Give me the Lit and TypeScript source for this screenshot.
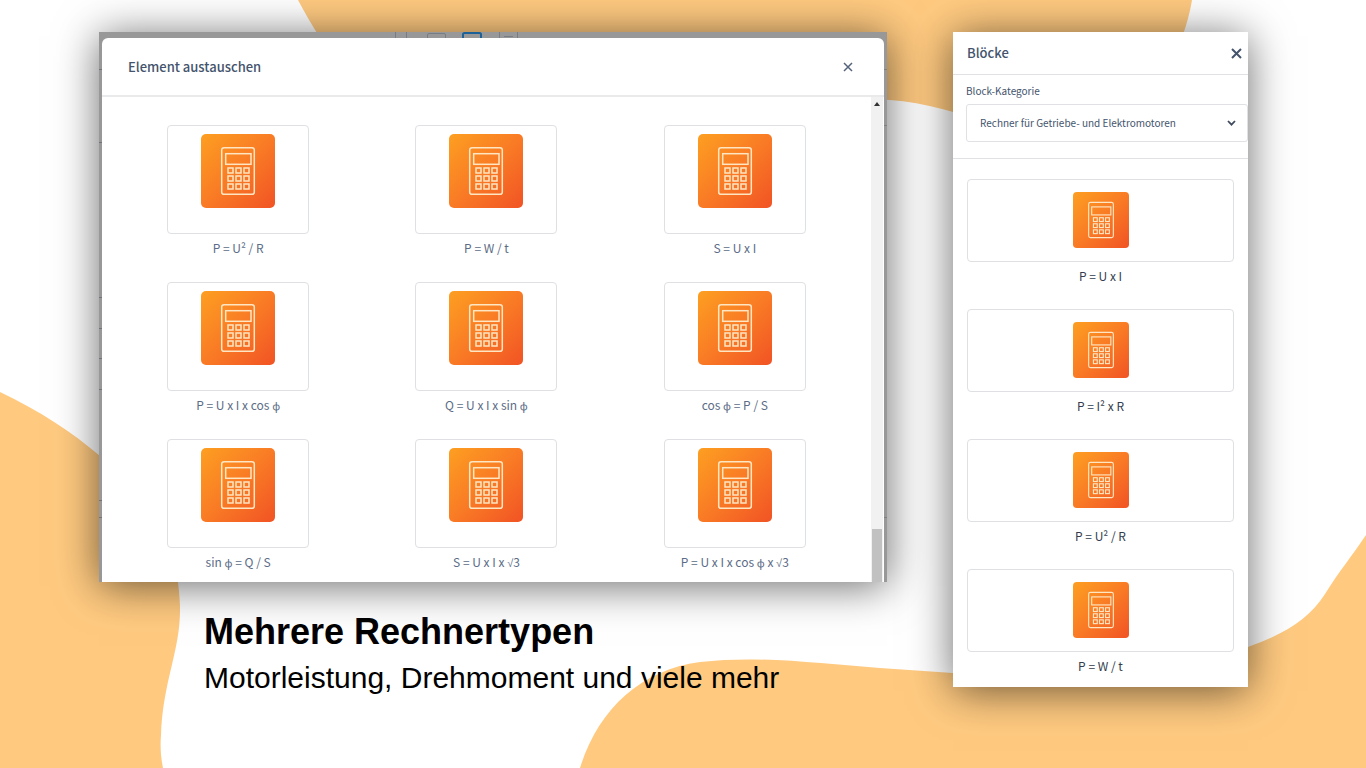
import { LitElement, html, svg, css } from "lit";
import { customElement, property } from "lit/decorators.js";

const KEY_X = [27, 35, 43];
const KEY_Y = [34, 42, 50];

/** Sets the mathematical symbols of a formula in a face with compact glyphs. */
const formula = (text: string) =>
  text
    .split(/([ϕ√])/)
    .map((part) => (/[ϕ√]/.test(part) ? html`<span class="symbol">${part}</span>` : part));

@customElement("calc-icon")
class CalcIcon extends LitElement {
  static styles = css`
    :host {
      display: block;
    }
    .tile {
      display: block;
      width: 100%;
      height: 100%;
    }
  `;

  render() {
    return html`<svg class="tile" viewBox="0 0 74 74" aria-hidden="true">
      <defs>
        <linearGradient id="g" x1="0" y1="0" x2="1" y2="1">
          <stop offset="0" stop-color="#fd9f21" />
          <stop offset="0.5" stop-color="#f97b25" />
          <stop offset="1" stop-color="#f15324" />
        </linearGradient>
      </defs>
      <rect width="74" height="74" rx="5" fill="url(#g)" />
      <g fill="none" stroke="#ffe6c2" stroke-width="1.5">
        <rect x="20.7" y="13.7" width="32.6" height="46.6" rx="2.4" />
        <rect x="24.7" y="19.7" width="25.3" height="10.6" />
        ${KEY_Y.map((y) =>
          KEY_X.map((x) => svg`<rect x=${x} y=${y} width="5" height="5" />`)
        )}
      </g>
    </svg>`;
  }
}

@customElement("element-dialog")
class ElementDialog extends LitElement {
  @property({ attribute: false }) items: string[] = [];

  static styles = css`
    :host {
      display: flex;
      flex-direction: column;
      position: relative;
      overflow: hidden;
      background: #989898;
      color: #44546c;
    }
    .toolbar {
      display: flex;
      height: 6px;
      flex: none;
      padding-left: 295px;
    }
    .toolbar svg {
      display: block;
    }
    .edge {
      position: absolute;
      top: 0;
      width: 4px;
      height: 100%;
    }
    .edge.left {
      left: 0;
    }
    .edge.right {
      right: 0;
    }
    .dialog {
      position: relative;
      flex: 1;
      min-height: 0;
      display: flex;
      flex-direction: column;
      margin: 0 3px;
      background: #fff;
      border-radius: 6px 6px 0 0;
    }
    .head {
      display: flex;
      align-items: center;
      justify-content: space-between;
      height: 57px;
      flex: none;
      padding: 0 31px 0 26px;
      border-bottom: 2px solid #e9eaec;
    }
    h2 {
      margin: 0;
      font-size: 13px;
      line-height: 20px;
      font-weight: 500;
    }
    .close {
      display: flex;
      padding: 0;
      border: 0;
      background: none;
    }
    .body {
      flex: 1;
      min-height: 0;
      display: flex;
    }
    .list {
      flex: 1;
      display: grid;
      grid-template-columns: repeat(3, minmax(0, 1fr));
      grid-auto-rows: 157px;
      justify-items: center;
      margin: 0;
      padding: 28px 12px 0;
      list-style: none;
      overflow: hidden;
    }
    .item {
      display: flex;
      flex-direction: column;
      align-items: center;
      gap: 4px;
      padding: 0;
      border: 0;
      background: none;
      color: #5c6c86;
      font: inherit;
      font-size: 12px;
      line-height: 20px;
    }
    .symbol {
      font-family: "Noto Sans", sans-serif;
      font-size: 11px;
      line-height: 1;
    }
    .frame {
      display: flex;
      justify-content: center;
      box-sizing: border-box;
      width: 142px;
      height: 109px;
      padding-top: 8px;
      border: 1px solid #dfe0e3;
      border-radius: 4px;
      background: #fff;
    }
    .icon {
      width: 74px;
      height: 74px;
    }
    .scroll {
      display: flex;
      flex-direction: column;
      justify-content: space-between;
      align-items: center;
      width: 12px;
      margin-right: 1px;
      background: #f1f1f1;
    }
    .arrow {
      display: block;
      margin-top: 5px;
    }
    .thumb {
      width: 10px;
      height: 53px;
      background: #c1c1c1;
    }
  `;

  render() {
    return html`
      <div class="toolbar">
        <svg width="130" height="6" viewBox="0 0 130 6" fill="none" stroke="#777d84" aria-hidden="true">
          <path d="M1.500 0v6M12.500 0v6M105.500 0v6M123.500 0v6M110 4.500h9" />
          <path d="M33.500 6V3q0-1.500 1.500-1.500h15q1.500 0 1.500 1.500v3" />
          <path d="M69 6V2.500q0-1.500 1.500-1.500h15q1.500 0 1.500 1.500V6" stroke="#1c6298" stroke-width="2" />
        </svg>
      </div>
      <svg class="edge left" aria-hidden="true">
        <path d="M0 37.500h3M0 110.500h3M0 265.500h3M0 296.500h3M0 326.500h3M0 357.500h3M0 468.500h3M0 485.500h3" stroke="#707478" />
      </svg>
      <svg class="edge right" aria-hidden="true">
        <path d="M1 37.500h3M1 93.500h3M1 485.500h3" stroke="#808080" />
      </svg>
      <section class="dialog" role="dialog" aria-labelledby="title">
        <header class="head">
          <h2 id="title">Element austauschen</h2>
          <button class="close" type="button" aria-label="Schließen">
            <svg width="10" height="10" viewBox="0 0 10 10" stroke="#54637c" stroke-width="1.500">
              <path d="M1 1l8 8M9 1L1 9" />
            </svg>
          </button>
        </header>
        <div class="body">
          <ul class="list">
            ${this.items.map(
              (name) => html`<li>
                <button class="item" type="button">
                  <span class="frame"><calc-icon class="icon"></calc-icon></span>
                  <span>${formula(name)}</span>
                </button>
              </li>`
            )}
          </ul>
          <div class="scroll" aria-hidden="true">
            <svg class="arrow" width="6" height="4" viewBox="0 0 6 4">
              <path d="M0 4L3 0l3 4z" fill="#333" />
            </svg>
            <div class="thumb"></div>
          </div>
        </div>
      </section>
    `;
  }
}

@customElement("block-panel")
class BlockPanel extends LitElement {
  @property({ attribute: false }) items: string[] = [];

  static styles = css`
    :host {
      display: block;
      box-sizing: border-box;
      padding-bottom: 11px;
      background: #fff;
      color: #44546c;
    }
    .head {
      display: flex;
      align-items: center;
      justify-content: space-between;
      height: 42px;
      padding: 0 6px 0 14px;
      border-bottom: 1px solid #dfe1e5;
    }
    h2 {
      margin: 0;
      font-size: 13px;
      line-height: 20px;
      font-weight: 500;
    }
    .close {
      display: flex;
      padding: 0;
      border: 0;
      background: none;
    }
    .field {
      display: flex;
      flex-direction: column;
      gap: 5px;
      padding: 8px 0 16px 13px;
      border-bottom: 1px solid #dfe1e5;
      font-size: 10px;
      line-height: 16px;
    }
    .control {
      display: grid;
      align-items: center;
    }
    select,
    .chevron {
      grid-area: 1 / 1;
    }
    select {
      appearance: none;
      box-sizing: border-box;
      width: 100%;
      height: 38px;
      padding: 0 32px 0 13px;
      border: 1px solid #dfe1e5;
      border-radius: 3px;
      background: #fff;
      color: inherit;
      font: inherit;
    }
    .chevron {
      justify-self: end;
      margin-right: 12px;
      pointer-events: none;
    }
    .list {
      display: grid;
      gap: 23px;
      margin: 0;
      padding: 20px 14px 0;
      list-style: none;
    }
    .item {
      display: flex;
      flex-direction: column;
      gap: 4px;
      width: 100%;
      padding: 0;
      border: 0;
      background: none;
      color: #333d4d;
      font: inherit;
      font-size: 12px;
      line-height: 20px;
    }
    .frame {
      display: flex;
      justify-content: center;
      padding: 12px 0 13px;
      border: 1px solid #dfe0e3;
      border-radius: 4px;
    }
    .icon {
      width: 56px;
      height: 56px;
    }
  `;

  render() {
    return html`
      <header class="head">
        <h2>Blöcke</h2>
        <button class="close" type="button" aria-label="Schließen">
          <svg width="11" height="11" viewBox="0 0 11 11" stroke="#44546c" stroke-width="2">
            <path d="M1 1l9 9M10 1L1 10" />
          </svg>
        </button>
      </header>
      <div class="field">
        <label for="category">Block-Kategorie</label>
        <div class="control">
          <select id="category">
            <option>Rechner für Getriebe- und Elektromotoren</option>
          </select>
          <svg class="chevron" width="9" height="6" viewBox="0 0 9 6" fill="none" stroke="#3f4b5c" stroke-width="1.800">
            <path d="M1 1l3.500 3.700L8 1" />
          </svg>
        </div>
      </div>
      <ul class="list">
        ${this.items.map(
          (name) => html`<li>
            <button class="item" type="button">
              <span class="frame"><calc-icon class="icon"></calc-icon></span>
              <span>${name}</span>
            </button>
          </li>`
        )}
      </ul>
    `;
  }
}

@customElement("app-root")
class AppRoot extends LitElement {
  static styles = css`
    :host {
      display: block;
      position: relative;
      min-height: 100vh;
      overflow: hidden;
      background: #fff;
      font-family: "Noto Sans CJK SC", "Noto Sans", sans-serif;
    }
    .backdrop {
      position: absolute;
      inset: 0;
      width: 100%;
      height: 100%;
    }
    .page {
      position: relative;
      display: grid;
      grid-template-columns: minmax(0, 788fr) minmax(0, 295fr);
      align-items: start;
      gap: 66px;
      padding: 32px 118px 0 99px;
    }
    .shot {
      box-shadow: 0 4px 40px rgba(0, 0, 0, 0.58);
    }
    .large {
      height: 550px;
    }
    .words {
      padding: 26px 0 0 105px;
      color: #000;
      font-family: "Liberation Sans", Arial, sans-serif;
    }
    h1 {
      margin: 0;
      font-size: 36px;
      line-height: 48px;
      font-weight: 700;
    }
    p {
      margin: 0;
      font-size: 30px;
      line-height: 44px;
    }
  `;

  private elements = [
    "P = U² / R",
    "P = W / t",
    "S = U x I",
    "P = U x I x cos ϕ",
    "Q = U x I x sin ϕ",
    "cos ϕ = P / S",
    "sin ϕ = Q / S",
    "S = U x I x √3",
    "P = U x I x cos ϕ x √3",
  ];

  private blocks = ["P = U x I", "P = I² x R", "P = U² / R", "P = W / t"];

  render() {
    return html`
      <svg class="backdrop" viewBox="0 0 1366 768" preserveAspectRatio="none" fill="#ffca80" aria-hidden="true">
        <path d="M298 0C312 26 330 56 352 82C400 135 500 160 600 150C720 135 800 95 890 100C925 102 960 114 1000 126C1080 148 1150 110 1180 42C1186 28 1190 12 1192 0Z" />
        <path d="M0 392C40 411 72 432 100 456C150 500 178 540 180 606C181 650 163 680 161 735C160 748 161 758 163 768H0Z" />
        <path d="M580 768C598 710 640 670 700 662C760 655 820 664 880 668L953 673C1050 676 1150 672 1248 647C1285 634 1310 618 1325 594C1340 570 1352 556 1366 535V768Z" />
      </svg>
      <main class="page">
        <div>
          <element-dialog class="shot large" .items=${this.elements}></element-dialog>
          <div class="words">
            <h1>Mehrere Rechnertypen</h1>
            <p>Motorleistung, Drehmoment und viele mehr</p>
          </div>
        </div>
        <block-panel class="shot" .items=${this.blocks}></block-panel>
      </main>
    `;
  }
}
